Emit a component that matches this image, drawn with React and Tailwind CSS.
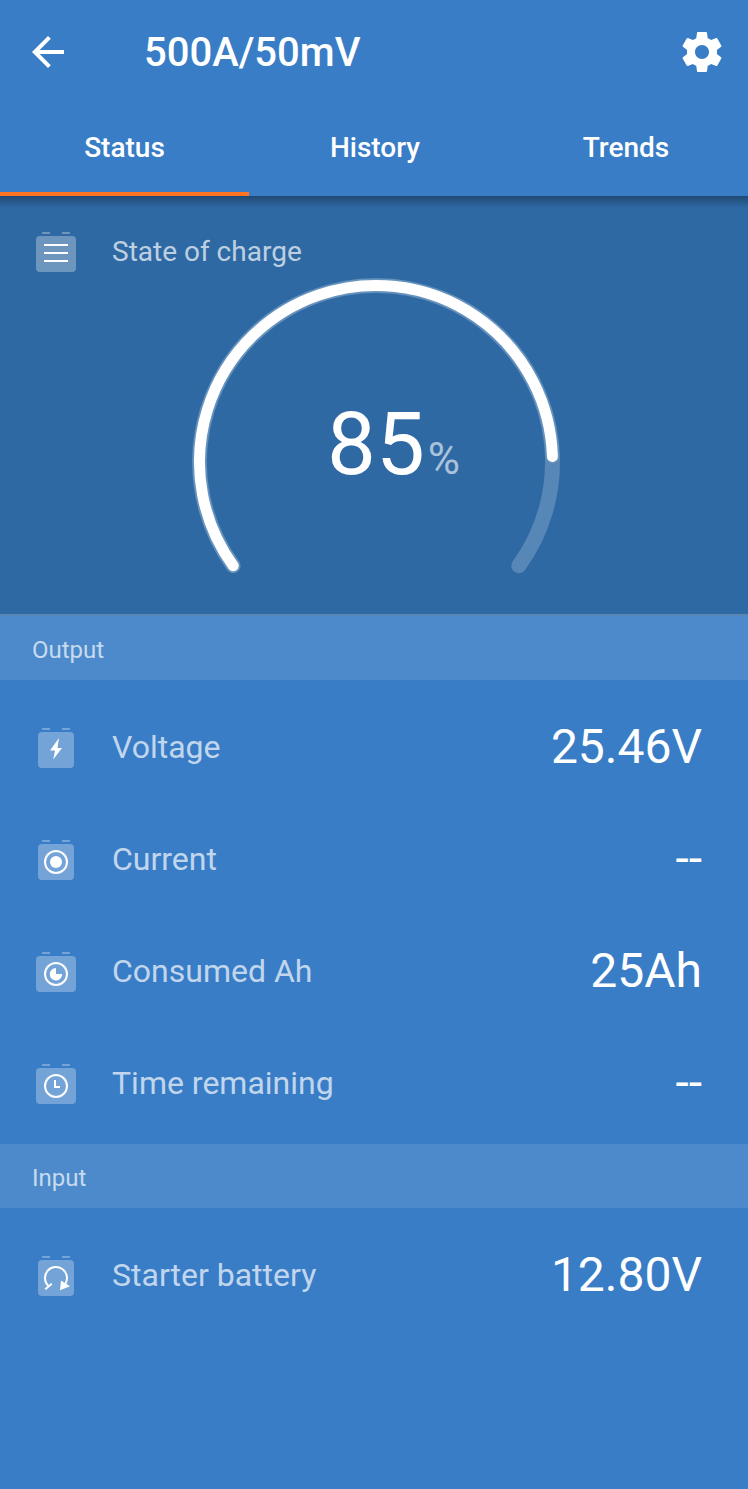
import React from 'react';
import { MdArrowBack } from 'react-icons/md';

const OUTPUT_ROWS = [
  { label: 'Voltage', value: '25.46V', icon: 'voltage' },
  { label: 'Current', value: '--', icon: 'current' },
  { label: 'Consumed Ah', value: '25Ah', icon: 'consumed' },
  { label: 'Time remaining', value: '--', icon: 'time' },
];

const INPUT_ROWS = [{ label: 'Starter battery', value: '12.80V', icon: 'starter' }];

const TABS = ['Status', 'History', 'Trends'];

const GLYPHS = {
  charge: <path d="M12 12h24v2H12zM12 20h24v2H12zM12 28h24v2H12z" fill="#fff" />,
  voltage: <path d="M27 10 18 22.5h5l-1.8 9L30 20h-4.5z" fill="#fff" />,
  current: (
    <>
      <circle cx="24" cy="22" r="11" fill="none" stroke="#fff" strokeWidth="2" />
      <circle cx="24" cy="22" r="6" fill="#fff" />
    </>
  ),
  consumed: (
    <>
      <circle cx="24" cy="22" r="11" fill="none" stroke="#fff" strokeWidth="2" />
      <path d="M24 16a6.2 6.2 0 1 0 6.2 6H24z" fill="#fff" />
    </>
  ),
  time: (
    <>
      <circle cx="24" cy="22" r="11" fill="none" stroke="#fff" strokeWidth="2" />
      <path d="M22 16h2v6h4v2h-6z" fill="#fff" />
    </>
  ),
  starter: (
    <>
      <path d="M16.2 29.8A11 11 0 1 1 33.5 27.5" fill="none" stroke="#fff" strokeWidth="2" />
      <path d="M13.3 33.3 19.7 27.7" stroke="#fff" strokeWidth="2" />
      <path d="M29 24.5 38 30.2 28 34.3z" fill="#fff" />
    </>
  ),
};

const WIDE = ['charge', 'consumed', 'time'];

const BatteryIcon = ({ name }) => {
  const wide = WIDE.includes(name);

  return (
    <svg width="48" height="40" viewBox="0 0 48 40" className="shrink-0">
      <g fill="#fff" fillOpacity="0.3">
        <rect x="10" width="8" height="2" />
        <rect x="30" width="8" height="2" />
        <rect x={wide ? 4 : 6} y="4" width={wide ? 40 : 36} height="36" rx="4" />
      </g>
      {GLYPHS[name]}
    </svg>
  );
};

const SettingsIcon = () => (
  <svg width="48" height="48" viewBox="0 0 24 24" fill="currentColor">
    <path d="M19.43 12.98c.04-.32.07-.64.07-.98s-.03-.66-.07-.98l2.11-1.65c.19-.15.24-.42.12-.64l-2-3.46c-.12-.22-.39-.3-.61-.22l-2.49 1c-.52-.4-1.08-.73-1.69-.98l-.38-2.65C14.46 2.18 14.25 2 14 2h-4c-.25 0-.46.18-.49.42l-.38 2.65c-.61.25-1.17.59-1.69.98l-2.49-1c-.23-.09-.49 0-.61.22l-2 3.46c-.13.22-.07.49.12.64l2.11 1.65c-.04.32-.07.65-.07.98s.03.66.07.98l-2.11 1.65c-.19.15-.24.42-.12.64l2 3.46c.12.22.39.3.61.22l2.49-1c.52.4 1.08.73 1.69.98l.38 2.65c.03.24.24.42.49.42h4c.25 0 .46-.18.49-.42l.38-2.65c.61-.25 1.17-.59 1.69-.98l2.49 1c.23.09.49 0 .61-.22l2-3.46c.12-.22.07-.49-.12-.64l-2.11-1.65zM12 15.5c-1.93 0-3.5-1.57-3.5-3.5s1.57-3.5 3.5-3.5 3.5 1.57 3.5 3.5-1.57 3.5-3.5 3.5z" />
  </svg>
);

// The dial opens at the bottom and sweeps 252 degrees
const Gauge = ({ percent }) => {
  const r = 176.5;
  const point = (deg) => {
    const rad = (deg * Math.PI) / 180;
    return `${188 + r * Math.cos(rad)} ${188 + r * Math.sin(rad)}`;
  };
  const arc = (share) => {
    const sweep = 252 * share;
    return `M${point(144)}A${r} ${r} 0 ${sweep > 180 ? 1 : 0} 1 ${point(144 + sweep)}`;
  };

  return (
    <svg width="376" height="310" viewBox="0 0 376 310" fill="none" strokeLinecap="round">
      <path d={arc(1)} stroke="#fff" strokeOpacity="0.2" strokeWidth="15" />
      <path d={arc(percent / 100)} stroke="#fff" strokeOpacity="0.1" strokeWidth="14" />
      <path d={arc(percent / 100)} stroke="#fff" strokeWidth="11" />
    </svg>
  );
};

const SectionHeader = ({ title, className }) => (
  <div className={`bg-[#4c8acb] px-8 text-2xl text-white/70 ${className}`}>{title}</div>
);

const Row = ({ label, value, icon }) => (
  <div className="flex h-28 items-center pl-8 pr-[46px]">
    <BatteryIcon name={icon} />
    <span className="ml-8 pb-[2px] text-[32px] leading-10 text-white/70">{label}</span>
    <span className="ml-auto pb-[2px] text-5xl leading-[56px]">{value}</span>
  </div>
);

const App = () => {
  return (
    <div className="flex h-[1489px] w-[748px] flex-col overflow-hidden bg-[#397dc6] font-['Roboto',sans-serif] text-white">
      <header className="h-[196px] shrink-0">
        <div className="flex h-[104px] items-center pl-6 pr-[22px]">
          <MdArrowBack size={48} />
          <h1 className="ml-[72px] pt-[2px] text-[40px] font-medium leading-12">500A/50mV</h1>
          <button className="ml-auto">
            <SettingsIcon />
          </button>
        </div>
        <nav className="grid h-[92px] grid-cols-[249px_252px_250px]">
          {TABS.map((tab, i) => (
            <button
              key={tab}
              className={`border-b-4 pb-[1px] text-[28px] font-medium ${i === 0 ? 'border-[#ff7423]' : 'border-transparent'}`}
            >
              {tab}
            </button>
          ))}
        </nav>
      </header>

      <section className="relative h-[418px] shrink-0 bg-[#2e69a4]">
        <div className="h-3 bg-linear-to-b from-black/30 to-transparent" />
        <div className="flex items-center pl-8 pt-6">
          <BatteryIcon name="charge" />
          <span className="ml-8 text-[28px] leading-10 text-white/70">State of charge</span>
        </div>
        <div className="absolute left-[188px] top-[78px]">
          <Gauge percent={85} />
        </div>
        <div className="absolute left-[327px] top-[196px] flex items-baseline">
          <span className="text-[87px] leading-[104px]">85</span>
          <span className="ml-[3px] text-[44px] text-white/60">%</span>
        </div>
      </section>

      <SectionHeader title="Output" className="h-[66px] border-t-2 border-[#5887b6] pt-[2px] leading-[64px]" />
      <div className="pb-1 pt-3">
        {OUTPUT_ROWS.map((row) => (
          <Row key={row.label} {...row} />
        ))}
      </div>

      <SectionHeader title="Input" className="h-16 pt-[2px] leading-[64px]" />
      <div className="pt-3">
        {INPUT_ROWS.map((row) => (
          <Row key={row.label} {...row} />
        ))}
      </div>
    </div>
  );
};

export default App;
